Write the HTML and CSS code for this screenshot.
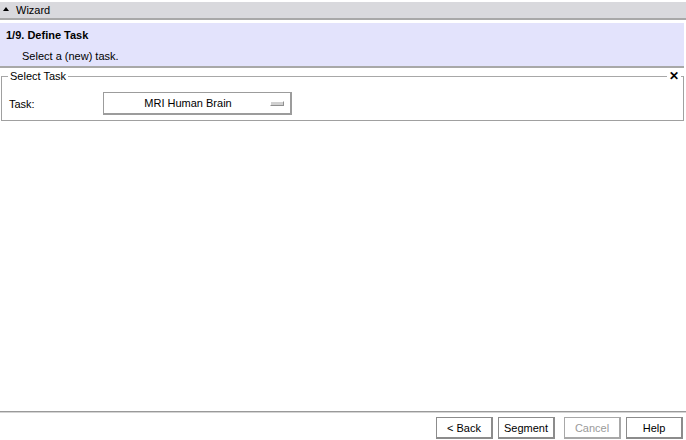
FILE: index.html
```html
<!DOCTYPE html>
<html>
<head>
<meta charset="utf-8">
<link rel="stylesheet" href="styles.css">
</head>
<body>
<div class="app">
  <div class="titlebar"><span class="tri"></span><span class="title">Wizard</span></div>
  <div class="step">
    <div class="step-title">1/9. Define Task</div>
    <div class="step-desc">Select a (new) task.</div>
  </div>
  <div class="group">
    <div class="legend">Select Task</div>
    <div class="close">✕</div>
    <div class="row">
      <div class="label">Task:</div>
      <div class="combo"><span class="combo-text">MRI Human Brain</span><span class="combo-ind"></span></div>
    </div>
  </div>
  <div class="spacer"></div>
  <div class="footer">
    <button class="btn">&lt; Back</button>
    <button class="btn">Segment</button>
    <button class="btn disabled">Cancel</button>
    <button class="btn">Help</button>
  </div>
</div>
</body>
</html>
```
FILE: styles.css
```css
html, body { margin: 0; padding: 0; background: #fff; }
body { font-family: "Liberation Sans", Arial, sans-serif; font-size: 11px; color: #000; }
.app { width: 686px; height: 440px; display: flex; flex-direction: column; }
.titlebar {
  margin-top: 2px; height: 16px; background: #d9d9dd; border-bottom: 2px solid #a8a8a8;
  display: flex; align-items: center;
}
.tri { width: 0; height: 0; border-left: 3px solid transparent; border-right: 3px solid transparent; border-bottom: 4px solid #000; margin-left: 3px; margin-right: 7px; margin-top: -3px; }
.title { font-size: 11px; }
.step {
  margin-top: 3px; width: 684px; height: 45px; background: #e3e3fc; border-bottom: 2px solid #a8a8a8;
  box-sizing: border-box;
}
.step-title { font-weight: bold; padding: 6px 0 0 6px; height: 15px; }
.step-desc { padding: 6px 0 0 22px; }
.group {
  position: relative; margin: 8px 2px 0 1px; height: 45px; border: 1px solid #a0a0a0; border-top-color: #a8a8a8;
  box-sizing: border-box;
}
.legend { position: absolute; left: 6px; top: -7px; background: #fff; padding: 0 2px 0 2px; line-height: 12px; }
.close { position: absolute; right: 2px; top: -8px; background: #fff; padding: 0 2px; font-size: 12px; font-weight: bold; line-height: 14px; }
.row { display: flex; align-items: center; padding: 15px 0 0 7px; }
.label { width: 94px; }
.combo {
  width: 189px; height: 23px; box-sizing: border-box; border: 1px solid #9c9c9c; border-right-width: 2px; border-bottom-width: 2px;
  display: flex; align-items: center; position: relative;
}
.combo-text { flex: 1; text-align: center; padding-right: 24px; padding-left: 6px; }
.combo-ind { position: absolute; right: 6px; top: 8px; width: 12px; height: 3px; border: 1px solid #909090; border-top-color: #fff; border-left-color: #fff; background: #d0d0d0; }
.spacer { flex: 1; }
.footer {
  border-top: 1px solid #999; box-shadow: inset 0 1px 0 #d4d4d4; height: 29px; display: flex; justify-content: flex-end; align-items: flex-start;
  padding-top: 5px; box-sizing: border-box; gap: 5px; padding-right: 3px;
}
.btn {
  font-family: "Liberation Sans", Arial, sans-serif; font-size: 11px; background: #fff; color: #000;
  width: 57px; height: 22px; border: 1px solid #8c8c8c; border-right-width: 2px; border-bottom-width: 2px; padding: 0; margin: 0;
}
.btn.disabled { color: #9a9a9a; border-color: #a8a8a8; margin-left: 4px; }
```
